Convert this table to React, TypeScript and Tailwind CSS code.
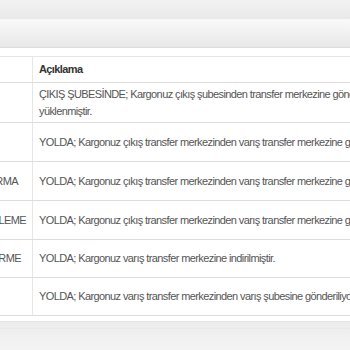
const rows = [
  {
    left: '',
    pr: 'pr-[6px]',
    text: 'ÇIKIŞ ŞUBESİNDE; Kargonuz çıkış şubesinden transfer merkezine gönderilmek üzere araca yüklenmiştir.',
    h: 'h-[40px]',
  },
  {
    left: '',
    pr: 'pr-[6px]',
    text: 'YOLDA; Kargonuz çıkış transfer merkezinden varış transfer merkezine gönderiliyor.',
    h: 'h-[39px]',
  },
  {
    left: 'TRANSFER MERKEZİNE AKTARMA',
    pr: 'pr-[14px]',
    text: 'YOLDA; Kargonuz çıkış transfer merkezinden varış transfer merkezine gönderiliyor.',
    h: 'h-[39px]',
  },
  {
    left: 'ARACA YÜKLEME',
    pr: 'pr-[6px]',
    text: 'YOLDA; Kargonuz çıkış transfer merkezinden varış transfer merkezine gönderiliyor.',
    h: 'h-[39px]',
  },
  {
    left: 'ARAÇTAN İNDİRME',
    pr: 'pr-[11px]',
    text: 'YOLDA; Kargonuz varış transfer merkezine indirilmiştir.',
    h: 'h-[38px]',
  },
  {
    left: '',
    pr: 'pr-[6px]',
    text: 'YOLDA; Kargonuz varış transfer merkezinden varış şubesine gönderiliyor.',
    h: 'h-[38px]',
  },
];

const App = () => {
  return (
    <div className="w-[350px] h-[350px] overflow-hidden bg-white text-[11px] tracking-[-0.6px] text-[#555] font-['Liberation_Sans',Arial,sans-serif]">
      <div className="h-[20px] bg-gradient-to-b from-[#f2f2f2] to-[#e9e9e9] border-b border-[#f7f7f7]" />
      <div className="h-[28px] bg-gradient-to-b from-[#f9f9f9] to-[#e8e8e8] border-b border-[#dcdcdc]" />
      <div className="h-[8px]" />
      <div className="w-[700px] border-t border-[#e6e6e6]">
        <div className="flex h-[26px] border-b border-[#dddddd]">
          <div className="w-[33px] shrink-0 border-r border-[#e6e6e6]" />
          <div className="flex items-center pl-[6px] font-bold text-[#333]">Açıklama</div>
        </div>
        {rows.map((r, i) => (
          <div key={i} className={`flex ${r.h} border-b border-[#dddddd]`}>
            <div className={`w-[33px] shrink-0 overflow-hidden flex items-center justify-end border-r border-[#e6e6e6] ${r.pr}`}>
              <span className="whitespace-nowrap">{r.left}</span>
            </div>
            <div className="w-[440px] flex items-center pl-[6px] leading-[17px]">{r.text}</div>
          </div>
        ))}
      </div>
      <div className="h-[5px]" />
      <div className="h-[30px] bg-gradient-to-b from-[#ececec] to-[#f4f4f4] border-t border-[#e4e4e4]">
        <div className="mt-[6px] border-t border-[#e9e9e9]" />
      </div>
    </div>
  );
};

export default App;
